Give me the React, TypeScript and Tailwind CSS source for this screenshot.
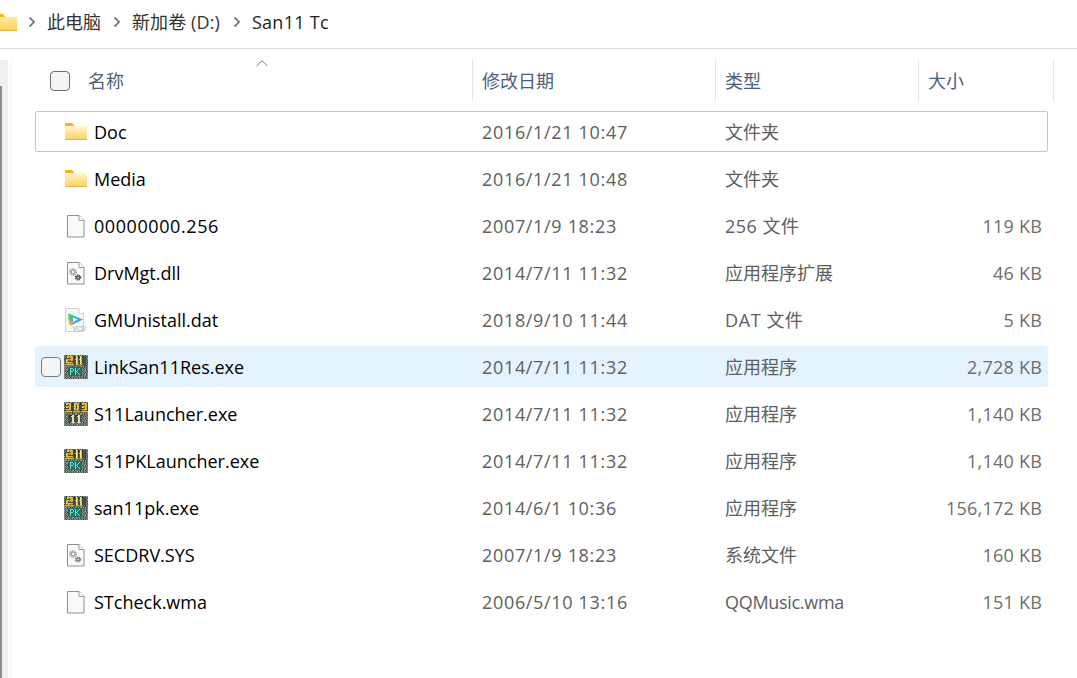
import React from "react";

const F = "font-['Open_Sans','Noto_Sans_CJK_SC',sans-serif]";

const palette: Record<string, string> = {
  ".": "#454e47",
  g: "#7f8b80",
  h: "#aeb7a9",
  y: "#d8b646",
  l: "#f3e690",
  o: "#94701f",
  t: "#5fe8d0",
  d: "#1c7269",
  k: "#262c27",
  c: "#e6e2b0",
};

const pkMap = [
  "gg.gh.gg.g.gh.gg.g.gg.hg",
  "g..yyyyyy.k.lyk.lyk....g",
  ".g.lyoyyy.k.lyk.lyk...g.",
  "g...k.oyy...ly..ly.....h",
  "..yyyyyyy..yly.yly.....g",
  "g.lyoooyy...ly..ly....g.",
  "..yy....k...ly..ly.....g",
  "h.lyyyyyy...ly..ly....g.",
  "..ooyoooo...ly..ly.....g",
  "gyyyyyyyyy.oyyooyyo...h.",
  "g.oooooooo.ooooooooo...g",
  "ghg.gg.g.g.gg.g.gh.g.g.g",
  "g.g.g.dddddddddddd.g.g.g",
  "gg.g.dtttddtdddtd.g.gg.g",
  "g.hg.dtddtdtddtdd.gg.g.g",
  "gg.g.dtddtdtdtddd.g.gh.g",
  "g.g..dtttddttddddg.gg.g.",
  "gh.g.dtddddtdtddd.g.g.gg",
  "g.gg.dtddddtddtdd.gg.g.g",
  "gg.g.dtddddtdddtd.g.gh.g",
  "g.g.gdddddddddddd.g.gg.g",
  "gg.gg.g.gh.gg.gg.gg.g.gg",
  "g.h.gg.gg.g.gh.g.gg.gg.g",
  "gg.gg.g.g.gg.g.gg.g.g.gg",
];

const elevenMap = [
  "gh.gg.gg.g.gh.gg.g.gh.gg",
  "g.yyyyy.k.yyyyy.k.yyyyy.",
  "..lyoyy.k.lyoyy.k.lyoyy.",
  "g..k.yy...yy.yy...k.oyy.",
  "..yyyyy...ly.ly...yyyyy.",
  "h.lyoyy...yy.yy...lyoyy.",
  "...k.yy...ly.ly...k.oyy.",
  "g.yyyyy...yyyyy...yyyyy.",
  "..ooooo...ooooo...ooooo.",
  "gyyyyyyy.yyyyyyy.yyyyyyy",
  "g.oooooo.oooooooo.oooooo",
  "ghg.gg.g.g.gg.g.gh.g.g.g",
  "g.g.g.gg.g.gh.g.gg.g.g.g",
  "gg.g..kkcc..kkcc...g.gg.",
  "g.hg.k.ccc.k.ccc..g.g.gg",
  "gg.g....cc....cc..g.gh.g",
  "g.g.....cc....cc.g.gg.g.",
  "gh.g....cc....cc..g.g.gg",
  "g.gg....cc....cc..gg.g.g",
  "gg.g....cc....cc..g.gh.g",
  "g.g.g..cccc..cccc.g.gg.g",
  "gg.gg.g.gh.gg.gg.gg.g.gg",
  "g.h.gg.gg.g.gh.g.gg.gg.g",
  "gg.gg.g.g.gg.g.gg.g.g.gg",
];

function PixelIcon({ map }: { map: string[] }) {
  return (
    <svg width="24" height="24" viewBox="0 0 24 24" shapeRendering="crispEdges" className="shrink-0">
      {map.map((row, y) =>
        row.split("").map((ch, x) => <rect key={x + "-" + y} x={x} y={y} width="1" height="1" fill={palette[ch] ?? "#454e47"} />)
      )}
    </svg>
  );
}

function FolderIcon() {
  return (
    <svg width="24" height="24" viewBox="0 0 24 24" className="shrink-0">
      <defs>
        <linearGradient id="fg" x1="0" y1="0" x2="0" y2="1">
          <stop offset="0" stopColor="#fff6d2" />
          <stop offset="1" stopColor="#fdd05c" />
        </linearGradient>
      </defs>
      <path d="M1 3h7l2 2v1H1z" fill="#f7b51c" />
      <rect x="1" y="6" width="22" height="14" fill="url(#fg)" />
      <rect x="1" y="19" width="22" height="1" fill="#ecb33b" />
    </svg>
  );
}

function Gear({ cx, cy, r, color }: { cx: number; cy: number; r: number; color: string }) {
  return (
    <g>
      <circle cx={cx} cy={cy} r={r} fill="none" stroke={color} strokeWidth="1.2" strokeDasharray="1.2 0.9" />
      <circle cx={cx} cy={cy} r={r * 0.6} fill="none" stroke={color} strokeWidth="1.5" />
    </g>
  );
}

function FileIcon({ gears, light }: { gears?: boolean; light?: boolean }) {
  return (
    <svg width="24" height="24" viewBox="0 0 24 24" className="shrink-0">
      <path d="M3.5 1.5h11.5l5 5v16.5h-16.5z" fill="#fafafa" stroke="#8f8f8f" />
      <path d="M15 1.5v5h5" fill="#fff" stroke="#9c9c9c" />
      {gears && (
        <>
          <Gear cx={9} cy={11} r={3.4} color="#9aa3ad" />
          <Gear cx={14} cy={16.5} r={2.6} color={light ? "#7b838b" : "#4c5660"} />
        </>
      )}
    </svg>
  );
}

function VcdIcon() {
  return (
    <svg width="24" height="24" viewBox="0 0 24 24" className="shrink-0">
      <path d="M1.5 0.5h13l5 5v18h-18z" fill="#f6f6f6" stroke="#d2d2d2" />
      <path d="M15 0.5v5h5" fill="#fff" stroke="#d2d2d2" />
      <path d="M4.5 5.5 L19 11.5 L7 17.5 Z" fill="#2fb2ee" />
      <path d="M4.5 5.5 L11 8.5 L4.5 12.5 Z" fill="#52cc4f" />
      <path d="M4.5 12 L10 14 L7 17.5 Q4.5 16 4.5 12 Z" fill="#f7a823" />
      <path d="M9 9.5 L13.5 11.5 L9 14 Z" fill="#fff" />
      <text x="8.5" y="23" fontSize="6.5" fill="#a9aeb3" fontFamily="Liberation Sans">VCD</text>
    </svg>
  );
}

type Row = { name: string; nameT?: string; date: string; type: string; typeT?: string; size: string; icon: React.ReactNode };

const rows: Row[] = [
  { name: "Doc", date: "2016/1/21 10:47", type: "文件夹", size: "", icon: <FolderIcon /> },
  { name: "Media", date: "2016/1/21 10:48", type: "文件夹", size: "", icon: <FolderIcon /> },
  { name: "00000000.256", nameT: "tracking-[0.58px]", date: "2007/1/9 18:23", type: "256 文件", typeT: "tracking-[0.5px]", size: "119 KB", icon: <FileIcon /> },
  { name: "DrvMgt.dll", date: "2014/7/11 11:32", type: "应用程序扩展", size: "46 KB", icon: <FileIcon gears /> },
  { name: "GMUnistall.dat", date: "2018/9/10 11:44", type: "DAT 文件", typeT: "tracking-[0.6px]", size: "5 KB", icon: <VcdIcon /> },
  { name: "LinkSan11Res.exe", date: "2014/7/11 11:32", type: "应用程序", size: "2,728 KB", icon: <PixelIcon map={pkMap} /> },
  { name: "S11Launcher.exe", date: "2014/7/11 11:32", type: "应用程序", size: "1,140 KB", icon: <PixelIcon map={elevenMap} /> },
  { name: "S11PKLauncher.exe", date: "2014/7/11 11:32", type: "应用程序", size: "1,140 KB", icon: <PixelIcon map={pkMap} /> },
  { name: "san11pk.exe", date: "2014/6/1 10:36", type: "应用程序", size: "156,172 KB", icon: <PixelIcon map={pkMap} /> },
  { name: "SECDRV.SYS", date: "2007/1/9 18:23", type: "系统文件", size: "160 KB", icon: <FileIcon gears light /> },
  { name: "STcheck.wma", date: "2006/5/10 13:16", type: "QQMusic.wma", typeT: "tracking-[-0.3px]", size: "151 KB", icon: <FileIcon /> },
];

function Chevron() {
  return (
    <svg width="8" height="10" viewBox="0 0 8 10" className="shrink-0">
      <path d="M1.5 0.5 L6 5 L1.5 9.5" fill="none" stroke="#6a6a6a" strokeWidth="1.7" />
    </svg>
  );
}

export default function App() {
  return (
    <div className={`${F} w-[1077px] h-[678px] overflow-hidden bg-white flex flex-col text-[18px] leading-[24px] text-[#1a1a1a]`}>
      <div className="h-[49px] shrink-0 border-b border-[#dcdcdc] flex items-center pb-[4px]">
        <svg width="17" height="17" viewBox="0 0 17 17" className="shrink-0">
          <defs>
            <linearGradient id="bf" x1="0" y1="0" x2="0" y2="1">
              <stop offset="0" stopColor="#ffe9a0" />
              <stop offset="1" stopColor="#fdcf58" />
            </linearGradient>
          </defs>
          <path d="M0 0h3l2 3H0z" fill="#f7b51c" />
          <rect x="0" y="3" width="17" height="14" fill="url(#bf)" />
          <rect x="0" y="16" width="17" height="1" fill="#ecb33b" />
        </svg>
        <span className="ml-[11px] flex"><Chevron /></span>
        <span className="ml-[11px] text-[#333]">此电脑</span>
        <span className="ml-[12px] flex"><Chevron /></span>
        <span className="ml-[11px] text-[#333] tracking-[0.1px]">新加卷 (D:)</span>
        <span className="ml-[13px] flex"><Chevron /></span>
        <span className="ml-[11px] text-[#222] tracking-[0.3px]">San11 Tc</span>
      </div>

      <div className="flex-1 flex min-h-0">
        <div className="w-[8px] shrink-0 mt-[11px] bg-[#f0f0f0] pt-[26px]">
          <div className="w-[2px] h-full bg-[#8c8c8c]" />
        </div>
        <div className="w-[2px] shrink-0 ml-[2px] mt-[11px] bg-[#f8f8f8]" />

        <div className="flex-1 min-w-0 pl-[23px]">
          <div className="relative h-[62px] flex text-[#4c607a]">
            <span className="absolute left-[221px] top-[11px] flex">
              <svg width="12" height="7" viewBox="0 0 12 7"><path d="M0.5 6 L6 0.8 L11.5 6" fill="none" stroke="#7a7a7a" /></svg>
            </span>
            <div className="w-[438px] shrink-0 h-[42px] mt-[11px] border-r border-[#e5e5e5] flex items-center pl-[15px]">
              <div className="w-[20px] h-[20px] rounded-[4px] border border-[#6e6e6e] bg-[#f5f5f5]" />
              <span className="ml-[18px]">名称</span>
            </div>
            <div className="w-[243px] shrink-0 h-[42px] mt-[11px] border-r border-[#e5e5e5] flex items-center pl-[9px]">修改日期</div>
            <div className="w-[203px] shrink-0 h-[42px] mt-[11px] border-r border-[#e5e5e5] flex items-center pl-[9px]">类型</div>
            <div className="w-[135px] shrink-0 h-[42px] mt-[11px] border-r border-[#e5e5e5] flex items-center pl-[9px]">大小</div>
          </div>

          <div className="flex flex-col gap-[6px] w-[1013px]">
            {rows.map((r, i) => (
              <div
                key={r.name}
                className={
                  "h-[41px] flex items-center rounded-[2px] border " +
                  (i === 0 ? "border-[#99d1ff] " : i === 5 ? "border-transparent bg-[#e5f3ff] " : "border-transparent ")
                }
              >
                <div className="w-[28px] shrink-0 pl-[5px]">
                  {i === 5 && <div className="w-[20px] h-[20px] rounded-[4px] border border-[#7a7a7a] bg-[#f5f5f5]" />}
                </div>
                <div className="w-[24px] flex shrink-0">{r.icon}</div>
                <div className={"ml-[6px] w-[388px] shrink-0 text-black " + (r.nameT ?? "")}>{r.name}</div>
                <div className="w-[243px] shrink-0 text-[#5e5e5e] tracking-[0.67px]">{r.date}</div>
                <div className={"w-[190px] shrink-0 text-[#5e5e5e] " + (r.typeT ?? "")}>{r.type}</div>
                <div className="w-[127px] shrink-0 text-right text-[#6d6d6d] tracking-[0.23px]">{r.size}</div>
              </div>
            ))}
          </div>
        </div>
      </div>
    </div>
  );
}
